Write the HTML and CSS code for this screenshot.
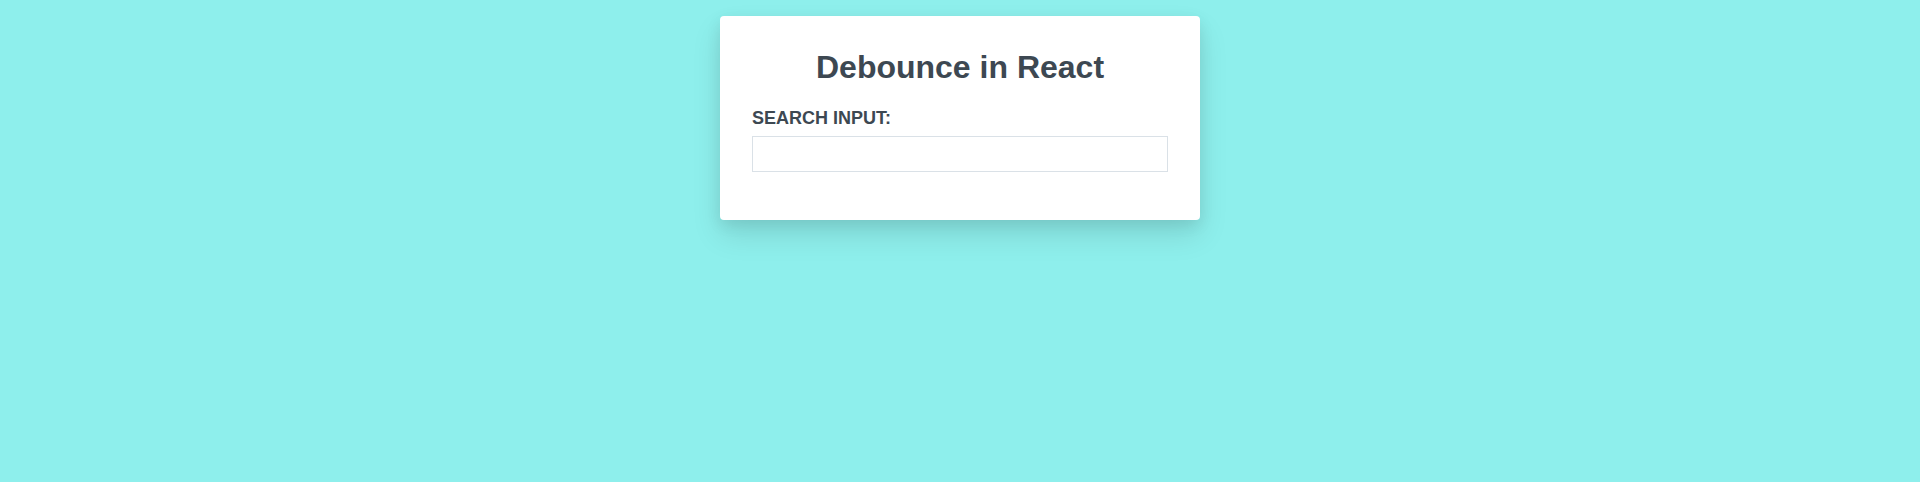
FILE: index.html
```html
<!DOCTYPE html>
<html lang="en">
<head>
<meta charset="utf-8">
<title>Debounce in React</title>
<link rel="stylesheet" href="styles.css">
</head>
<body>
<main class="page">
  <section class="card">
    <h1 class="title">Debounce in React</h1>
    <label class="label" for="search">SEARCH INPUT:</label>
    <input class="input" id="search" type="text">
  </section>
</main>
</body>
</html>
```
FILE: styles.css
```css
html, body {
  margin: 0;
  padding: 0;
}
body {
  background: #8eefec;
  font-family: "Liberation Sans", Arial, sans-serif;
  color: #3d4852;
  height: 482px;
}
.page {
  display: flex;
  justify-content: center;
  padding-top: 16px;
}
.card {
  width: 480px;
  box-sizing: border-box;
  background: #fff;
  border-radius: 4px;
  padding: 31px 32px 48px;
  display: flex;
  flex-direction: column;
  box-shadow: 0 15px 30px 0 rgba(0,0,0,0.11), 0 5px 15px 0 rgba(0,0,0,0.08);
}
.title {
  margin: 0;
  font-size: 32px;
  line-height: 40px;
  font-weight: 700;
  text-align: center;
}
.label {
  margin-top: 20px;
  font-size: 18px;
  line-height: 22px;
  font-weight: 700;
}
.input {
  margin-top: 7px;
  height: 36px;
  box-sizing: border-box;
  border: 1px solid #dae1e7;
  border-radius: 0;
  padding: 8px 12px;
  font: inherit;
  font-size: 16px;
  outline: none;
}
```
